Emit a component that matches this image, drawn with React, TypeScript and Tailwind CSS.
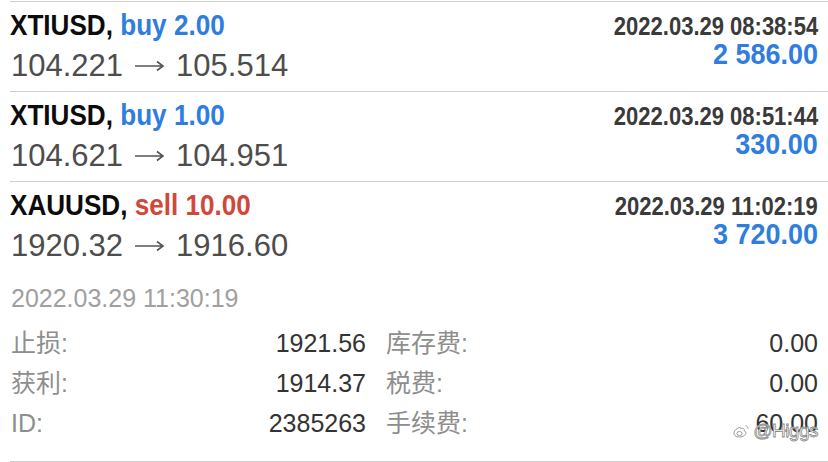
const SANS = { fontFamily: '"Liberation Sans", Arial, sans-serif' }

type Trade = {
  symbol: string
  side: 'buy' | 'sell'
  volume: string
  open: string
  close: string
  time: string
  profit: string
}

const TRADES: Trade[] = [
  { symbol: 'XTIUSD', side: 'buy', volume: '2.00', open: '104.221', close: '105.514', time: '2022.03.29 08:38:54', profit: '2 586.00' },
  { symbol: 'XTIUSD', side: 'buy', volume: '1.00', open: '104.621', close: '104.951', time: '2022.03.29 08:51:44', profit: '330.00' },
  { symbol: 'XAUUSD', side: 'sell', volume: '10.00', open: '1920.32', close: '1916.60', time: '2022.03.29 11:02:19', profit: '3 720.00' },
]

function Arrow() {
  return (
    <svg className="mx-[11px] inline-block align-[3px]" width="31" height="12" viewBox="0 0 31 12" fill="none" stroke="#555" strokeWidth="1.6">
      <path d="M1 6h28M23 1.5l6 4.5-6 4.5" />
    </svg>
  )
}

function TradeHead({ t }: { t: Trade }) {
  return (
    <div className="flex items-start justify-between">
      <div className="pt-[6px]">
        <div className="origin-left scale-x-[0.87] whitespace-nowrap text-[30px] font-bold leading-[33px] text-[#0c0c0c]">
          {t.symbol},{' '}
          <span className={t.side === 'buy' ? 'text-[#2f7ddf]' : 'text-[#d2473c]'}>
            {t.side} {t.volume}
          </span>
        </div>
        <div className="mt-[7px] flex items-center whitespace-nowrap pl-[1px] text-[31px] leading-[36px] text-[#4d4d4d]">
          <span>{t.open}</span>
          <Arrow />
          <span>{t.close}</span>
        </div>
      </div>
      <div className="flex flex-col items-end pt-[11px]">
        <div className="origin-right scale-x-[0.88] whitespace-nowrap text-[25px] font-bold leading-[26px] text-[#3a3a3a]">
          {t.time}
        </div>
        <div className="origin-right scale-x-[0.93] whitespace-nowrap text-[29px] font-bold leading-[30px] text-[#2f7ddf]">
          {t.profit}
        </div>
      </div>
    </div>
  )
}

function WeiboMark() {
  return (
    <svg width="18" height="16" viewBox="0 0 18 16" fill="none" stroke="#9a9a9a" strokeWidth="1">
      <path d="M7.5 4.5C4 5.5 1.5 8.5 2 11c.6 2.6 4.6 3.6 8 2.6 3.2-1 4.6-3.2 3.6-4.8-.5-.8-1.6-.9-1.6-.9s.8-1.7-.4-2.4c-1.2-.7-3 .2-3 .2s.6-1.6-1.1-1.2z" fill="#fff" />
      <ellipse cx="7.5" cy="10.5" rx="2.6" ry="2" fill="#fff" />
      <path d="M13.5 2.5c1.6.2 2.8 1.6 2.6 3.3" />
    </svg>
  )
}

function DetailRow({ a, av, b, bv }: { a: string; av: string; b: string; bv: string }) {
  return (
    <div className="flex h-[40px] items-center gap-[20px] leading-[40px]">
      <div className="flex w-[355px] items-center justify-between">
        <span className="text-[25px] text-[#8e8e8e]">{a}</span>
        <span className="text-[25px] text-[#333]">{av}</span>
      </div>
      <div className="flex flex-1 items-center justify-between">
        <span className="text-[25px] text-[#8e8e8e]">{b}</span>
        <span className="text-[25px] text-[#333]">{bv}</span>
      </div>
    </div>
  )
}

export default function App() {
  const cjk = { fontFamily: '"Liberation Sans", "Noto Sans CJK SC", sans-serif' }
  return (
    <div className="h-[462px] w-[828px] overflow-hidden bg-white pl-[10px]" style={SANS}>
      <div className="mt-[1px] h-px bg-[#cfcfd2]" />
      {TRADES.slice(0, 2).map((t, i) => (
        <div key={i} className="h-[90px] border-b border-[#cfcfd2] pr-[10px]">
          <TradeHead t={t} />
        </div>
      ))}
      <div className="relative h-[280px] border-b border-[#cfcfd2] pr-[10px]" style={cjk}>
        <TradeHead t={TRADES[2]} />
        <div className="mt-[19px] pl-[1px] text-[25px] leading-[30px] text-[#a0a0a0]">2022.03.29 11:30:19</div>
        <div className="mt-[10px] pl-[1px]">
          <DetailRow a="止损:" av="1921.56" b="库存费:" bv="0.00" />
          <DetailRow a="获利:" av="1914.37" b="税费:" bv="0.00" />
          <DetailRow a="ID:" av="2385263" b="手续费:" bv="60.00" />
        </div>
        <div className="absolute bottom-[20px] right-[10px] flex items-center gap-[3px]">
          <WeiboMark />
          <span className="text-[19px] leading-[20px] tracking-[-0.5px] text-white [-webkit-text-stroke:0.8px_#8a8a8a]">
            @Higgs
          </span>
        </div>
      </div>
    </div>
  )
}
